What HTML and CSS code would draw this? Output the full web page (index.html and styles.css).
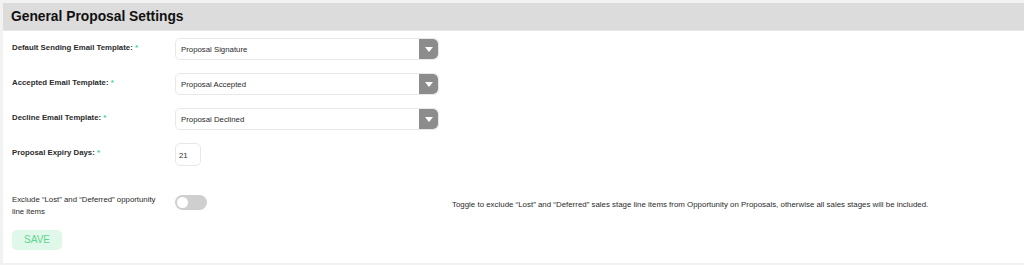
FILE: index.html
```html
<!DOCTYPE html>
<html lang="en">
<head>
	<meta charset="UTF-8">
	<title>General Proposal Settings</title>
	<link rel="stylesheet" href="styles.css">
</head>
<body>
	<div class="panel">
		<div class="panel-head">General Proposal Settings</div>
		<div class="panel-body">
			<div class="row">
				<label class="label">Default Sending Email Template: <span class="req">*</span></label>
				<div class="select">
					<span class="select-text">Proposal Signature</span>
					<span class="select-btn"><i class="tri"></i></span>
				</div>
			</div>
			<div class="row">
				<label class="label">Accepted Email Template: <span class="req">*</span></label>
				<div class="select">
					<span class="select-text">Proposal Accepted</span>
					<span class="select-btn"><i class="tri"></i></span>
				</div>
			</div>
			<div class="row">
				<label class="label">Decline Email Template: <span class="req">*</span></label>
				<div class="select">
					<span class="select-text">Proposal Declined</span>
					<span class="select-btn"><i class="tri"></i></span>
				</div>
			</div>
			<div class="row row-days">
				<label class="label">Proposal Expiry Days: <span class="req">*</span></label>
				<div class="days">21</div>
			</div>
			<div class="row row-toggle">
				<label class="label label-plain">Exclude “Lost” and “Deferred” opportunity line items</label>
				<div class="toggle"><span class="knob"></span></div>
				<div class="help">Toggle to exclude “Lost” and “Deferred” sales stage line items from Opportunity on Proposals, otherwise all sales stages will be included.</div>
			</div>
			<button class="save">SAVE</button>
		</div>
	</div>
</body>
</html>
```

FILE: styles.css
```css
body{
	margin: 0;
	padding: 3px 0 2px 3px;
	background: #f2f2f2;
	font-family: "Liberation Sans", Arial, sans-serif;
	color: #333;
}
.panel{
	background: #fff;
	height: 260px;
	box-sizing: border-box;
}
.panel-head{
	height: 28px;
	box-sizing: border-box;
	background: #dcdcdc;
	border-bottom: 1px solid #e6e6e6;
	padding: 6px 0 0 8px;
	font-size: 13.8px;
	font-weight: bold;
	color: #111;
}
.panel-body{
	padding: 7px 0 0 9px;
}
.row{
	display: flex;
	align-items: flex-start;
	margin-bottom: 13px;
}
.label{
	width: 163px;
	flex: none;
	padding-top: 5px;
	font-size: 7.8px;
	font-weight: bold;
	color: #2b2b2b;
}
.label-plain{
	font-weight: normal;
	line-height: 12px;
	padding-top: 0;
	width: 150px;
	margin-right: 13px;
}
.req{
	color: #3ccf9a;
}
.select{
	display: flex;
	width: 264px;
	height: 22px;
	box-sizing: border-box;
	border: 1px solid #e8e8e8;
	border-radius: 5px;
	overflow: hidden;
}
.select-text{
	flex: 1;
	padding: 6px 0 0 5px;
	font-size: 7.8px;
	color: #2b2b2b;
}
.select-btn{
	width: 19px;
	background: #8c8c8c;
	border-radius: 0 5px 5px 0;
	display: flex;
	align-items: center;
	justify-content: center;
}
.tri{
	width: 0;
	height: 0;
	border-left: 4px solid transparent;
	border-right: 4px solid transparent;
	border-top: 5px solid #fff;
	margin-top: 1px;
}
.row-days{
	margin-top: 1px;
	margin-bottom: 28px;
}
.days{
	width: 26px;
	height: 23px;
	box-sizing: border-box;
	border: 1px solid #e8e8e8;
	border-radius: 5px;
	font-size: 7.8px;
	padding: 7px 0 0 3px;
}
.row-toggle{
	margin-bottom: 11px;
}
.toggle{
	margin-top: 1px;
	width: 32px;
	height: 15px;
	border-radius: 8px;
	background: #cfcfcf;
	position: relative;
	flex: none;
}
.knob{
	position: absolute;
	left: 2px;
	top: 2px;
	width: 11px;
	height: 11px;
	border-radius: 50%;
	background: #fff;
}
.help{
	margin-left: 245px;
	padding-top: 6px;
	font-size: 7.9px;
	color: #2b2b2b;
	white-space: nowrap;
}
.save{
	width: 50px;
	height: 20px;
	border: none;
	border-radius: 5px;
	background: #e0f8ea;
	color: #5fd48f;
	font-family: "Liberation Sans", Arial, sans-serif;
	font-size: 10px;
	padding: 0;
}
```
